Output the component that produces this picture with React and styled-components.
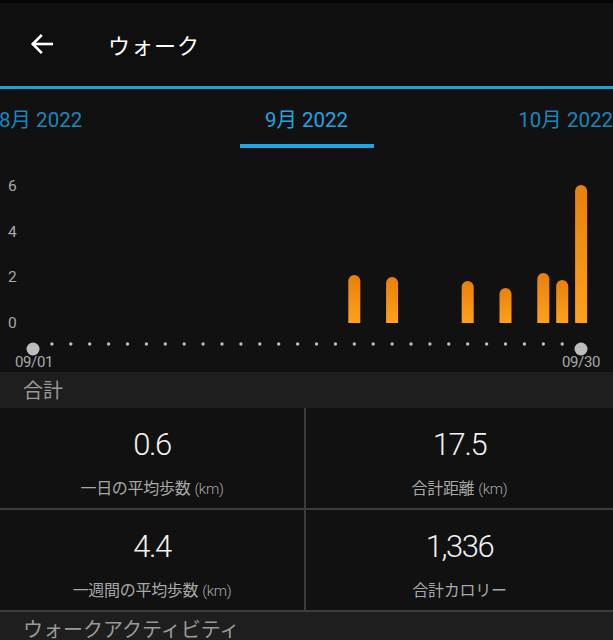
import React from "react";
import styled, { createGlobalStyle } from "styled-components";

const Global = createGlobalStyle`
  html, body { margin: 0; padding: 0; background: #111111; }
  body { width: 613px; height: 640px; overflow: hidden; font-family: Roboto, "Noto Sans CJK JP", sans-serif; }
  * { box-sizing: border-box; }
`;

const Page = styled.div`
  width: 613px;
  height: 640px;
  background: #111111;
  display: flex;
  flex-direction: column;
  overflow: hidden;
  & > * { flex-shrink: 0; }
`;

const Header = styled.header`
  height: 89px;
  display: flex;
  align-items: center;
  padding: 0 0 1px 28px;
  background: #0f0f0f;
  border-top: 3px solid #050505;
  border-bottom: 3px solid #1a9fdc;
`;

const BackButton = styled.div`
  width: 28px;
  height: 28px;
  display: flex;
  align-items: center;
  justify-content: center;
  margin-right: 52px;
`;

const Title = styled.h1`
  margin: 0;
  font-family: "Noto Sans CJK JP", sans-serif;
  font-weight: 400;
  font-size: 22px;
  color: #ffffff;
  letter-spacing: 1px;
`;

const Tabs = styled.nav`
  height: 60px;
  display: grid;
  grid-template-columns: 1fr 134px 1fr;
  align-items: stretch;
`;

const Tab = styled.div`
  display: flex;
  align-items: center;
  justify-content: ${(p) => p.$align || "center"};
  white-space: nowrap;
  font-family: Roboto, "Noto Sans CJK JP", sans-serif;
  font-size: 20.5px;
  color: ${(p) => (p.$active ? "#22a5e3" : "#1c86ba")};
  border-bottom: 4px solid ${(p) => (p.$active ? "#22a5e3" : "transparent")};
  margin-bottom: 1px;
  padding-top: 2px;
  margin-left: ${(p) => p.$ml || "0"};
  margin-right: ${(p) => p.$mr || "0"};
`;

const Chart = styled.div`
  height: 223px;
`;

const SectionHead = styled.div`
  height: ${(p) => p.$h || "36px"};
  background: #1e1e1e;
  color: #9a9a9a;
  font-family: "Noto Sans CJK JP", sans-serif;
  font-size: 20px;
  padding-left: 23px;
  display: flex;
  align-items: ${(p) => (p.$top ? "flex-start" : "center")};
  padding-top: ${(p) => (p.$top ? "7px" : "0")};
  line-height: 1;
`;

const Grid = styled.div`
  display: grid;
  grid-template-columns: 306px 1fr;
`;

const Cell = styled.div`
  height: 102px;
  display: flex;
  flex-direction: column;
  align-items: center;
  justify-content: flex-start;
  padding-top: 19px;
  border-bottom: 2px solid #3c3c3c;
  border-right: ${(p) => (p.$left ? "2px solid #3c3c3c" : "none")};
`;

const Value = styled.div`
  font-family: Roboto, sans-serif;
  font-weight: 300;
  font-size: 31px;
  letter-spacing: -1.4px;
  color: #f2f2f2;
  line-height: 36px;
`;

const Label = styled.div`
  margin-top: 14px;
  font-family: "Noto Sans CJK JP", sans-serif;
  font-size: 16px;
  line-height: 20px;
  color: #a8a8a8;
  letter-spacing: -0.3px;
  span { font-family: Roboto, sans-serif; font-weight: 300; font-size: 15px; margin-left: 4px; }
`;

const bars = [
  { d: 18, top: 275 },
  { d: 20, top: 277 },
  { d: 24, top: 281 },
  { d: 26, top: 288 },
  { d: 28, top: 273 },
  { d: 29, top: 280 },
  { d: 30, top: 185 },
];

const OFF = 149;
const dx = (d) => 33 + (d - 1) * 18.9;

function ChartSvg() {
  const dots = [];
  for (let d = 2; d <= 29; d++) dots.push(d);
  return (
    <svg width="613" height="223" viewBox="0 0 613 223">
      <defs>
        <linearGradient id="bg" x1="0" y1="0" x2="0" y2="1">
          <stop offset="0" stopColor="#e8800a" />
          <stop offset="1" stopColor="#ffa11c" />
        </linearGradient>
      </defs>
      {[["6", 185], ["4", 231], ["2", 276], ["0", 322]].map(([t, y]) => (
        <text key={t} x="8" y={y - OFF + 6} fill="#a8a8a8" fontSize="15.5" fontFamily="Roboto, sans-serif">{t}</text>
      ))}
      {bars.map((b) => {
        const x = dx(b.d) - 6;
        const h = 323 - b.top;
        const y = b.top - OFF;
        return (
          <path
            key={b.d}
            d={`M${x} ${y + h} V${y + 6} A6 6 0 0 1 ${x + 12} ${y + 6} V${y + h} Z`}
            fill="url(#bg)"
          />
        );
      })}
      {dots.map((d) => (
        <circle key={d} cx={dx(d)} cy={344 - OFF} r="1.7" fill="#bdbdbd" />
      ))}
      <circle cx={33} cy={349 - OFF} r="6.5" fill="#bdbdbd" />
      <circle cx={581} cy={349 - OFF} r="6.5" fill="#bdbdbd" />
      <text x="34" y={367 - OFF} textAnchor="middle" fill="#a8a8a8" fontSize="15" letterSpacing="-0.4" fontFamily="Roboto, sans-serif">09/01</text>
      <text x="581" y={367 - OFF} textAnchor="middle" fill="#a8a8a8" fontSize="15" letterSpacing="-0.4" fontFamily="Roboto, sans-serif">09/30</text>
    </svg>
  );
}

export default function App() {
  return (
    <Page>
      <Global />
      <Header>
        <BackButton>
          <svg width="26" height="26" viewBox="0 0 24 24" fill="none" stroke="#fff" strokeWidth="2.4" strokeLinecap="square">
            <path d="M21 12H4" />
            <path d="M11 4.5L3.5 12L11 19.5" />
          </svg>
        </BackButton>
        <Title>ウォーク</Title>
      </Header>
      <Tabs>
        <Tab $align="flex-start" $ml="-1px">8月 2022</Tab>
        <Tab $active>9月 2022</Tab>
        <Tab $align="flex-end">10月 2022</Tab>
      </Tabs>
      <Chart>
        <ChartSvg />
      </Chart>
      <SectionHead>合計</SectionHead>
      <Grid>
        <Cell $left>
          <Value>0.6</Value>
          <Label>一日の平均歩数<span>(km)</span></Label>
        </Cell>
        <Cell>
          <Value>17.5</Value>
          <Label>合計距離<span>(km)</span></Label>
        </Cell>
        <Cell $left>
          <Value>4.4</Value>
          <Label>一週間の平均歩数<span>(km)</span></Label>
        </Cell>
        <Cell>
          <Value>1,336</Value>
          <Label>合計カロリー</Label>
        </Cell>
      </Grid>
      <SectionHead $h="40px" $top>ウォークアクティビティ</SectionHead>
    </Page>
  );
}
